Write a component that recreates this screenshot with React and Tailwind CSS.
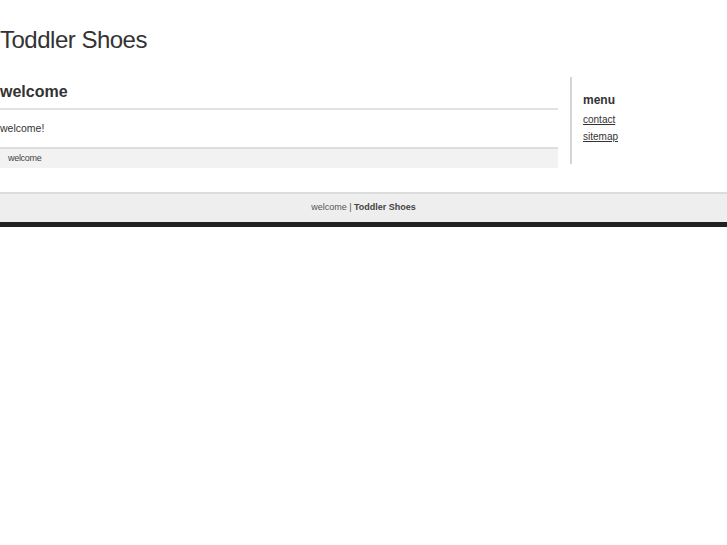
import React from "react";

export default function App() {
  return (
    <div className="min-h-screen bg-white text-[#333] font-['Liberation_Sans',Arial,sans-serif]">
      {/* Header */}
      <header className="h-[77px] pt-[26px]">
        <h1 className="text-[24px] leading-[28px] tracking-[-0.5px] text-[#333]">Toddler Shoes</h1>
      </header>

      <div className="flex items-start">
        {/* Main */}
        <main className="w-[558px]">
          <h2 className="pt-[5px] h-[33px] text-[16px] leading-[20px] font-bold border-b-2 border-[#e2e2e2]">
            welcome
          </h2>
          <p className="h-[39px] pt-[11px] text-[10.5px] leading-[14px] border-b-2 border-[#dedede]">welcome!</p>
          <div className="h-[19px] bg-[#f2f2f2] pl-[8px] text-[9px] leading-[19px] text-[#444] tracking-[-0.3px]">
            welcome
          </div>
        </main>

        {/* Sidebar */}
        <aside className="ml-[12px] h-[87px] border-l-2 border-[#d4d4d4] pl-[11px] pt-[16px]">
          <h3 className="text-[12px] leading-[14px] font-bold">menu</h3>
          <ul className="mt-[4px] text-[10px] leading-[17px]">
            <li>
              <a href="#" className="underline text-[#333]">contact</a>
            </li>
            <li>
              <a href="#" className="underline text-[#333]">sitemap</a>
            </li>
          </ul>
        </aside>
      </div>

      {/* Footer */}
      <footer className="mt-[24px]">
        <div className="h-[30px] bg-[#eeeeee] border-t-2 border-[#dcdcdc] text-center text-[9px] leading-[27px] text-[#555]">
          welcome | <span className="font-bold text-[#444]">Toddler Shoes</span>
        </div>
        <div className="h-[5px] bg-[#222]" />
      </footer>
    </div>
  );
}
